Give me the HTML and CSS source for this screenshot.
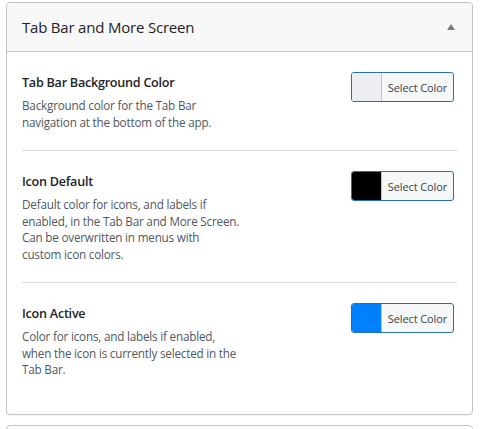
FILE: index.html
```html
<!DOCTYPE html>
<html lang="en">
<head>
  <meta charset="UTF-8">
  <title>Tab Bar and More Screen</title>
  <link rel="stylesheet" href="styles.css">
</head>
<body>
  <div class="panel">
    <div class="panel-header">
      <h2>Tab Bar and More Screen</h2>
      <span class="toggle"></span>
    </div>
    <div class="panel-body">
      <div class="setting">
        <div class="setting-info">
          <div class="setting-label">Tab Bar Background Color</div>
          <p class="setting-desc">Background color for the Tab Bar<br>navigation at the bottom of the app.</p>
        </div>
        <button class="color-btn" type="button">
          <span class="swatch swatch-light"></span>
          <span class="color-btn-text">Select Color</span>
        </button>
      </div>

      <div class="setting">
        <div class="setting-info">
          <div class="setting-label">Icon Default</div>
          <p class="setting-desc">Default color for icons, and labels if<br>enabled, in the Tab Bar and More Screen.<br>Can be overwritten in menus with<br>custom icon colors.</p>
        </div>
        <button class="color-btn" type="button">
          <span class="swatch swatch-black"></span>
          <span class="color-btn-text">Select Color</span>
        </button>
      </div>

      <div class="setting">
        <div class="setting-info">
          <div class="setting-label">Icon Active</div>
          <p class="setting-desc">Color for icons, and labels if enabled,<br>when the icon is currently selected in the<br>Tab Bar.</p>
        </div>
        <button class="color-btn" type="button">
          <span class="swatch swatch-blue"></span>
          <span class="color-btn-text">Select Color</span>
        </button>
      </div>
    </div>
  </div>

  <div class="panel panel-next"></div>
</body>
</html>
```

FILE: styles.css
```css
* {
  box-sizing: border-box;
}

body {
  margin: 0;
  padding: 2px 10px 0 6px;
  background: #fff;
  font-family: "Open Sans", "Noto Sans", sans-serif;
  color: #1d2327;
  overflow: hidden;
}

.panel {
  border: 1px solid #c3c4c7;
  border-radius: 4px;
  background: #fff;
  box-shadow: 0 1px 1px rgba(0, 0, 0, .04);
}

.panel-header {
  display: flex;
  align-items: center;
  justify-content: space-between;
  height: 49px;
  padding: 0 15px;
  background: #f8f8f8;
  border-bottom: 1px solid #c3c4c7;
  border-radius: 4px 4px 0 0;
}

.panel-header h2 {
  margin: 0;
  font-size: 15px;
  font-weight: 500;
  letter-spacing: -0.2px;
  color: #1d2327;
}

.toggle {
  width: 0;
  height: 0;
  margin: -1px 2px 0 0;
  border-left: 4px solid transparent;
  border-right: 4px solid transparent;
  border-bottom: 6px solid #787c82;
}

.panel-body {
  padding: 0 15px 16px;
}

.setting {
  display: flex;
  justify-content: space-between;
  align-items: flex-start;
  padding: 20px 3px 20px 0;
  border-bottom: 1px solid #dcdcde;
}

.setting:last-child {
  border-bottom: 0;
}

.setting-info {
  width: 250px;
}

.setting-label {
  margin-top: 1px;
  font-size: 12.6px;
  font-weight: 600;
  line-height: 20px;
  letter-spacing: -0.25px;
}

.setting-desc {
  margin: 4px 0 0;
  font-size: 11.7px;
  line-height: 16.5px;
  letter-spacing: -0.2px;
  color: #50575e;
}

.color-btn {
  display: flex;
  align-items: stretch;
  width: 103px;
  height: 30px;
  padding: 0;
  border: 1px solid #2271b1;
  border-radius: 3px;
  background: #f6f7f7;
  overflow: hidden;
  font-family: inherit;
  cursor: pointer;
}

.swatch {
  width: 30px;
  border-right: 1px solid #c3c4c7;
}

.swatch-light {
  background: #eceef1;
}

.swatch-black {
  background: #000;
}

.swatch-blue {
  background: #0080ff;
}

.color-btn-text {
  flex: 1;
  align-self: center;
  font-size: 11px;
  letter-spacing: -0.1px;
  color: #3c434a;
}

.panel-next {
  height: 20px;
  margin-top: 10px;
}
```
